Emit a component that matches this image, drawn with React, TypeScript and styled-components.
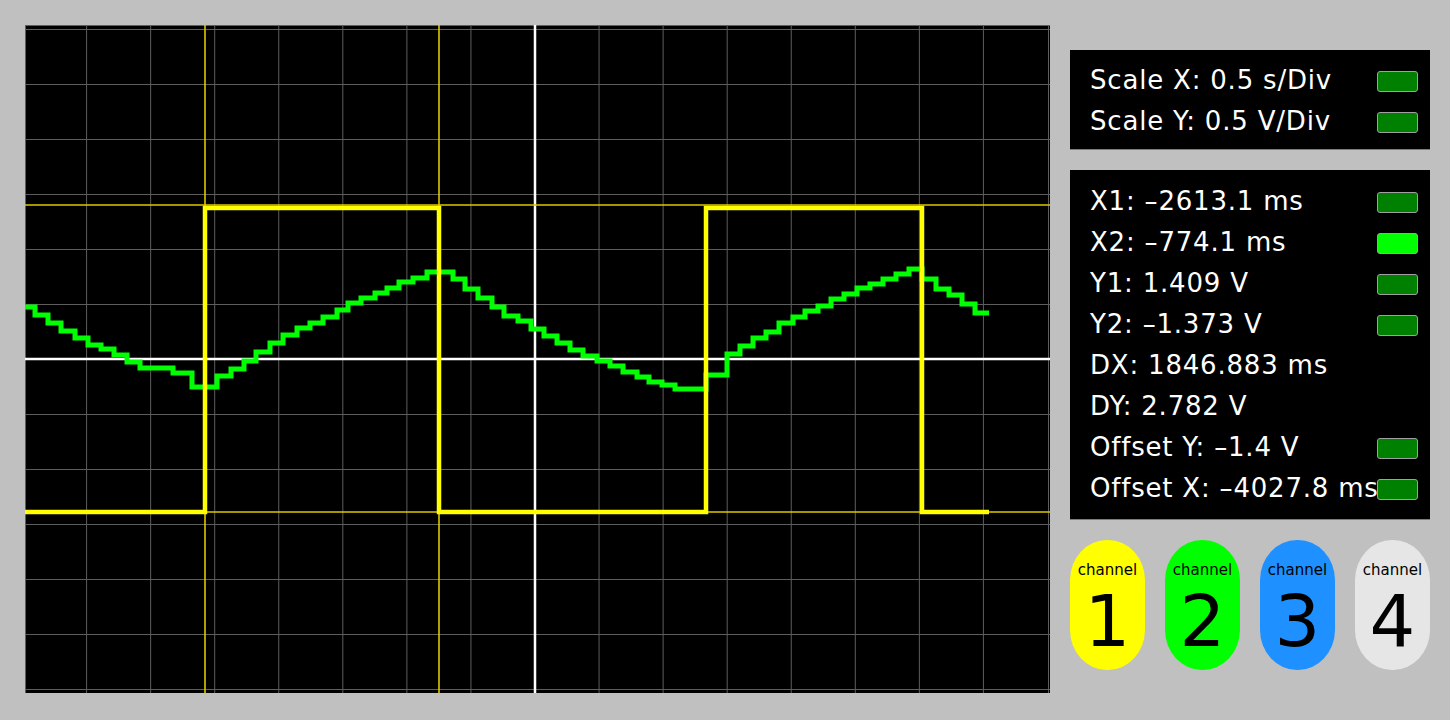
import { createGlobalStyle, styled } from "styled-components";

interface Reading {
  label: string;
  led?: "on" | "off";
}

const scaleReadings: Reading[] = [
  { label: "Scale X: 0.5 s/Div", led: "off" },
  { label: "Scale Y: 0.5 V/Div", led: "off" },
];

const cursorReadings: Reading[] = [
  { label: "X1: –2613.1 ms", led: "off" },
  { label: "X2: –774.1 ms", led: "on" },
  { label: "Y1: 1.409 V", led: "off" },
  { label: "Y2: –1.373 V", led: "off" },
  { label: "DX: 1846.883 ms" },
  { label: "DY: 2.782 V" },
  { label: "Offset Y: –1.4 V", led: "off" },
  { label: "Offset X: –4027.8 ms", led: "off" },
];

const channels = [
  { id: 1, color: "#ffff00" },
  { id: 2, color: "#00ff00" },
  { id: 3, color: "#1e90ff" },
  { id: 4, color: "#e6e6e6" },
];

// screen coords (px), viewBox starts at 25,25
const CENTER_X = 535;
const CENTER_Y = 359;
const gridX = Array.from({ length: 15 }, (_, i) => i - 7)
  .filter((k) => k !== 0)
  .map((k) => CENTER_X + k * 64.06)
  .concat([1048.5]);
const gridY = Array.from({ length: 13 }, (_, i) => i - 6)
  .filter((k) => k !== 0)
  .map((k) => CENTER_Y + k * 55);

// green trace: [x where the level starts, y]
const greenSteps: [number, number][] = [
  [25, 307], [35, 315], [48, 323], [61, 331], [75, 338], [88, 345],
  [101, 349], [114, 355], [127, 362], [140, 368], [173, 373], [192, 387],
  [217, 376], [231, 369], [244, 361], [256, 352], [270, 343], [283, 335],
  [297, 328], [310, 323], [323, 317], [337, 310], [348, 303], [361, 298],
  [375, 293], [387, 288], [399, 282], [413, 278], [427, 272], [453, 279],
  [465, 289], [478, 298], [492, 307], [504, 316], [518, 321], [531, 329],
  [544, 336], [557, 343], [570, 350], [583, 356], [597, 361], [610, 366],
  [623, 372], [637, 377], [649, 382], [662, 385], [675, 389], [706, 375],
  [727, 354], [740, 346], [753, 338], [766, 332], [779, 323], [793, 317],
  [805, 311], [818, 306], [831, 299], [844, 294], [857, 288], [870, 284],
  [883, 279], [896, 274], [909, 269], [922, 279], [936, 289], [949, 295],
  [962, 304], [975, 313],
];

const greenPath =
  greenSteps
    .map(([x, y], i) => (i === 0 ? `M${x},${y}` : `H${x} V${y}`))
    .join(" ") + " H989";

const yellowPath = "M25,512 H205 V208 H439 V512 H706 V208 H922 V512 H989";

function Scope() {
  return (
    <Screen>
      <svg width="1025" height="668" viewBox="25 25 1025 668">
        <g stroke="#5e5e5e" strokeWidth="1">
          <line x1="25" y1="25.5" x2="1050" y2="25.5" />
          <line x1="25.5" y1="25" x2="25.5" y2="693" />
          {gridX.map((x) => (
            <line key={`gx-${x}`} x1={x} y1="25" x2={x} y2="693" />
          ))}
          {gridY.map((y) => (
            <line key={`gy-${y}`} x1="25" y1={y + 0.5} x2="1050" y2={y + 0.5} />
          ))}
        </g>
        <g stroke="#ffffff" strokeWidth="2.5">
          <line x1="25" y1={CENTER_Y} x2="1050" y2={CENTER_Y} />
          <line x1={CENTER_X} y1="25" x2={CENTER_X} y2="693" />
        </g>
        <g stroke="#dcc800" strokeWidth="1.6">
          <line x1="205" y1="25" x2="205" y2="693" />
          <line x1="439" y1="25" x2="439" y2="693" />
          <line x1="25" y1="205" x2="1050" y2="205" />
          <line x1="25" y1="512" x2="1050" y2="512" />
        </g>
        <path d={greenPath} fill="none" stroke="#00ff00" strokeWidth="5" />
        <path d={yellowPath} fill="none" stroke="#ffff00" strokeWidth="4.5" />
      </svg>
    </Screen>
  );
}

function ReadingRows({ items }: { items: Reading[] }) {
  return (
    <>
      {items.map((item) => (
        <Row key={item.label}>
          <RowLabel>{item.label}</RowLabel>
          {item.led && <Led $on={item.led === "on"} />}
        </Row>
      ))}
    </>
  );
}

export default function App() {
  return (
    <>
      <GlobalStyle />
      <Page>
        <Scope />
        <SidePanel>
          <InfoBox>
            <ReadingRows items={scaleReadings} />
          </InfoBox>
          <CursorBox>
            <ReadingRows items={cursorReadings} />
          </CursorBox>
          <ChannelBar>
            {channels.map((ch) => (
              <ChannelButton key={`channel-${ch.id}`} $color={ch.color}>
                <ChannelCaption>channel</ChannelCaption>
                <ChannelNumber>{ch.id}</ChannelNumber>
              </ChannelButton>
            ))}
          </ChannelBar>
        </SidePanel>
      </Page>
    </>
  );
}

const GlobalStyle = createGlobalStyle`
  html, body {
    margin: 0;
    padding: 0;
    background: #c0c0c0;
  }
  body {
    font-family: "DejaVu Sans", "Liberation Sans", sans-serif;
  }
`;

const Page = styled.div`
  width: 1450px;
  height: 720px;
  background: #c0c0c0;
  display: flex;
  align-items: flex-start;
  padding: 25px 0 0 25px;
  box-sizing: border-box;
  gap: 20px;
`;

const Screen = styled.div`
  width: 1025px;
  height: 668px;
  background: #000;
  flex-shrink: 0;

  svg {
    display: block;
  }
`;

const SidePanel = styled.div`
  width: 360px;
  margin-top: 25px;
  display: flex;
  flex-direction: column;
  gap: 20px;
`;

const InfoBox = styled.div`
  background: #000;
  border-bottom: 1px solid #7c7c7c;
  box-sizing: border-box;
  height: 100px;
  padding: 10px 12px 0 20px;
`;

const CursorBox = styled(InfoBox)`
  height: 350px;
  padding-top: 11px;
`;

const Row = styled.div`
  height: 41px;
  display: flex;
  align-items: center;
  justify-content: space-between;
`;

const RowLabel = styled.span`
  color: #fff;
  font-size: 26px;
  letter-spacing: 0.8px;
  line-height: 41px;
  white-space: nowrap;
  flex: 1;
  min-width: 0;
`;

const Led = styled.div<{ $on: boolean }>`
  position: relative;
  width: 41px;
  height: 21px;
  margin-top: 2px;
  flex-shrink: 0;
  box-sizing: border-box;
  border: 1px solid #a0a0a0;
  border-radius: 3px;
  background: ${(props) => (props.$on ? "#00ff00" : "#008000")};
`;

const ChannelBar = styled.div`
  display: flex;
  justify-content: space-between;
`;

const ChannelButton = styled.div<{ $color: string }>`
  width: 75px;
  height: 130px;
  border-radius: 37px / 40px;
  background: ${(props) => props.$color};
  display: flex;
  flex-direction: column;
  align-items: center;
  color: #000;
  cursor: pointer;
`;

const ChannelCaption = styled.div`
  margin-top: 22px;
  font-size: 15px;
  line-height: 16px;
`;

const ChannelNumber = styled.div`
  margin-top: 7px;
  font-size: 72px;
  line-height: 72px;
`;
